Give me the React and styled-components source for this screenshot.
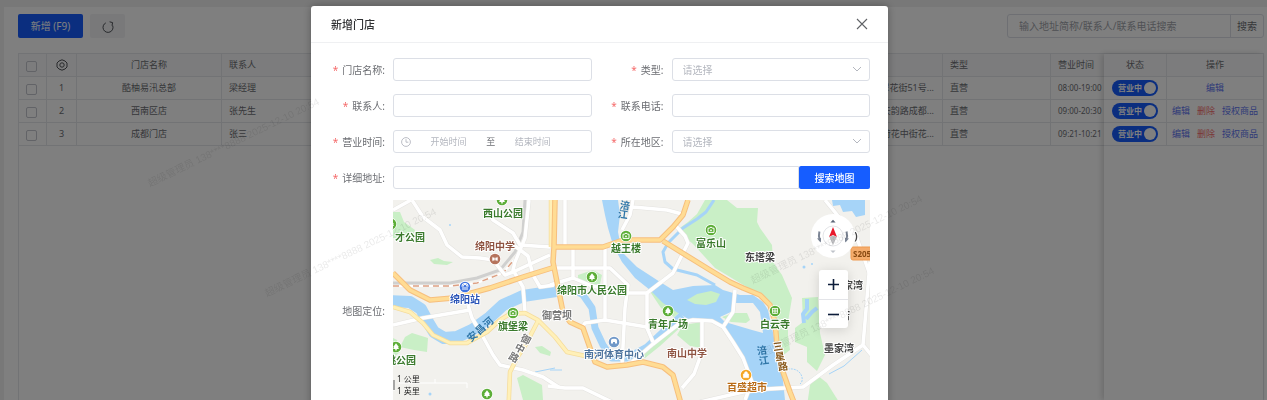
import React from 'react'
import styled, { createGlobalStyle } from 'styled-components'

const stores = [
  { id: 1, name: '酷柚易汛总部', contact: '梁经理', address: '成都市武侯区翠花街51号...', type: '直营', time: '08:00-19:00', main: true },
  { id: 2, name: '西南区店', contact: '张先生', address: '成都市高新区天韵路成都...', type: '直营', time: '09:00-20:30' },
  { id: 3, name: '成都门店', contact: '张三', address: '成都市武侯区荷花中街花...', type: '直营', time: '09:21-10:21' },
]

const greens = [
  'M705 200L727 200L737 208L758 208L757 222L760 228L772 245L773 262L782 275L792 298L788 322L788 335L790 350L782 356L777 328L772 305L760 295L740 283L715 268L693 244L677 230L688 222L697 214Z',
  'M802 298L818 297L820 333L825 355L817 371L807 362L807 347L795 342L795 328L803 322Z',
  'M817 375L827 383L839 402L845 420L805 420L810 385Z',
  'M683 325L702 322L702 348L690 346L677 335Z',
  'M578 275L593 270L602 275L600 284L588 286L578 280Z',
  'M393 212L400 212L404 222L415 230L412 238L393 238Z',
  'M405 337L412 333L428 338L427 352L414 350L400 347Z',
  'M517 378L523 375L542 385L543 400L548 420L527 420L523 400Z',
  'M535 347L542 346L551 352L550 356L540 353Z',
  'M430 260L438 258L444 261L453 262L447 265L434 264Z',
  'M393 338L397 340L400 352L393 358Z',
  'M632 358L652 343L682 320L684 324L660 346L645 358Z',
  'M649 290L660 295L680 312L674 317L661 308Z',
]

const islands = ['M687 300L697 294L711 291L720 294L716 302L706 305L695 304Z', 'M722 317L733 313L747 313L750 320L746 323L731 322Z']

const river =
  'M602 200L618 200L620 215L618 232L622 252L637 267L657 280L673 290L693 286L715 285L723 290L740 295L753 295L763 302L768 310L772 328L777 352L782 372L785 400L787 420L747 420L747 400L750 378L740 352L727 332L710 320L690 320L678 313L663 303L650 290L635 278L622 262L613 245L608 228L605 215Z'

const whiteRoads = [
  'M393 210L411 200',
  'M412 200L423 217L440 230L447 245L462 257L480 258L493 260L505 275L513 272L550 255',
  'M486 208L493 220L513 233L520 245L550 247',
  'M529 200L525 238L515 262L513 270L523 287L525 312',
  'M515 246L528 256L533 275L540 287L554 285',
  'M468 305L472 318L482 335L493 355L500 365L523 370L543 377L560 388',
  'M393 325L423 318L470 310',
  'M565 200V246',
  'M573 248V278',
  'M555 268L610 268L628 285L625 308L622 366',
  'M605 248V320',
  'M550 285L573 278L592 286L628 293L647 293V328L653 342',
  'M580 330L585 323L605 320L647 327',
  'M647 293L673 273L688 243L685 236L676 226',
  'M633 200L630 215L622 230M633 207L667 210L682 214',
  'M632 362L653 344L680 323L693 320L712 321L723 327L733 342L743 358L752 382L745 400',
  'M702 322V352L694 374L682 388',
  'M723 327L733 312L735 290',
  'M700 402L743 392L767 389L803 387L833 365L863 345',
  'M870 262L865 322L863 345L872 356',
  'M825 200L843 222L857 238L870 275',
  'M548 386L565 388L583 388L612 402',
]

const yellowRoads = [
  'M393 307L410 312L423 323L433 335L450 343L467 343L487 332L500 320L510 314L525 313L538 320L555 337L567 352L590 357',
  'M538 321L526 344L517 358L510 372L508 420',
  'M551 200V247',
]

const orangeRoads = [
  'M393 273L410 290L430 300L453 298L490 288L523 277L555 267',
  'M555 200L554 247L553 262L557 282L563 312L570 322L583 328L590 348L595 362L607 367L627 365L643 362L663 367L673 375L680 400L684 420',
  'M554 247L603 247L623 240L660 240L673 227L683 215L688 200',
  'M663 241L710 270L730 282L743 288L760 295L770 305L775 322L777 345L783 372L790 392L797 410',
]

const places = [
  { text: '西山公园', x: 503, y: 217, color: '#3a7a2c' },
  { text: '才公园', x: 410, y: 241, color: '#3a7a2c' },
  { text: '绵阳中学', x: 495, y: 250, color: '#8f5442' },
  { text: '绵阳站', x: 465, y: 303, color: '#2b55b8' },
  { text: '旗堡梁', x: 513, y: 330, color: '#3a7a2c' },
  { text: '御营坝', x: 557, y: 319, color: '#777' },
  { text: '绵阳市人民公园', x: 592, y: 294, color: '#3a7a2c' },
  { text: '越王楼', x: 626, y: 252, color: '#3a7a2c' },
  { text: '富乐山', x: 711, y: 247, color: '#3a7a2c' },
  { text: '东塔梁', x: 760, y: 261, color: '#444' },
  { text: '青年广场', x: 668, y: 328, color: '#3a7a2c' },
  { text: '南河体育中心', x: 614, y: 358, color: '#4d739d' },
  { text: '南山中学', x: 687, y: 357, color: '#8f5442' },
  { text: '白云寺', x: 775, y: 328, color: '#3a7a2c' },
  { text: '百盛超市', x: 747, y: 391, color: '#b86a14' },
  { text: '赵家湾', x: 848, y: 289, color: '#444' },
  { text: '杨家店', x: 835, y: 319, color: '#444' },
  { text: '墨家湾', x: 839, y: 352, color: '#444' },
  { text: '桃公园', x: 401, y: 364, color: '#3a7a2c' },
  { text: ')', x: 856, y: 240, color: '#444' },
]

const turned = [
  { text: '安', x: 472, y: 336, r: -40, color: '#2f76a8' },
  { text: '昌', x: 480, y: 329, r: -42, color: '#2f76a8' },
  { text: '河', x: 488, y: 322, r: -42, color: '#2f76a8' },
  { text: '御', x: 526, y: 339, r: 28, color: '#777' },
  { text: '中', x: 520, y: 348, r: 28, color: '#777' },
  { text: '路', x: 514, y: 357, r: 28, color: '#777' },
  { text: '涪', x: 625, y: 205, r: 8, color: '#2f76a8' },
  { text: '江', x: 623, y: 214, r: 8, color: '#2f76a8' },
  { text: '涪', x: 762, y: 350, r: -8, color: '#2f76a8' },
  { text: '江', x: 764, y: 360, r: -8, color: '#2f76a8' },
  { text: '三', x: 778, y: 346, r: -8, color: '#8a5a1c' },
  { text: '星', x: 780, y: 356, r: -8, color: '#8a5a1c' },
  { text: '路', x: 783, y: 366, r: -8, color: '#8a5a1c' },
]

const markers = [
  { x: 502, y: 200, kind: 'tree' },
  { x: 391, y: 224, kind: 'tree' },
  { x: 495, y: 259, kind: 'school', color: '#b5735c' },
  { x: 465, y: 287, kind: 'station', color: '#3f74e0' },
  { x: 513, y: 313, kind: 'camera' },
  { x: 592, y: 277, kind: 'tree' },
  { x: 626, y: 236, kind: 'camera' },
  { x: 711, y: 230, kind: 'camera' },
  { x: 668, y: 311, kind: 'tree' },
  { x: 614, y: 342, kind: 'sport', color: '#7098c8' },
  { x: 775, y: 311, kind: 'temple' },
  { x: 746, y: 375, kind: 'bag', color: '#f5a623' },
  { x: 396, y: 347, kind: 'tree' },
  { x: 487, y: 394, kind: 'tree' },
]

const watermarks = [[150, 187], [267, 297], [753, 284], [765, 356]]

const glyphs = {
  tree: <path d="M0 -3.8L3 0.2H1.9L3 2H0.7V3.6H-0.7V2H-3L-1.9 0.2H-3Z" fill="#fff" />,
  camera: (
    <g fill="none" stroke="#fff">
      <path d="M-3 -1.8H-1.4L-1 -2.6H1L1.4 -1.8H3V2.4H-3Z" />
      <circle r="0.9" cy="0.3" fill="#fff" stroke="none" />
    </g>
  ),
  school: <path d="M-3 -2.2L0 -1.4L3 -2.2V2.2L0 1.6L-3 2.2ZM0 -1.4V1.6" fill="#fff" stroke="#b5735c" strokeWidth="0.6" />,
  station: <path d="M-2 3V-0.6A2 2 0 0 1 2 -0.6V3M-3.2 -0.5A3.2 3.2 0 0 1 3.2 -0.5M0 0V3" fill="none" stroke="#fff" />,
  sport: <path d="M-3 -1.8A3 1.4 0 0 1 3 -1.8V1.6H1V0H-1V1.6H-3Z" fill="#fff" />,
  temple: <path d="M-3 -2.4H3M-2.4 -2.4V2.4H2.4V-2.4M-3 0H3M0 -2.4V2.4" fill="none" stroke="#fff" strokeWidth="0.9" />,
  bag: <path d="M-2.6 -1H2.6V2.6H-2.6ZM-1.4 -1V-1.8A1.4 1.4 0 0 1 1.4 -1.8V-1" fill="#fff" stroke="#fff" strokeWidth="0.7" />,
}

const MapCanvas = () => (
  <MapSvg viewBox="393 200 477 220" preserveAspectRatio="xMidYMid slice" role="img" aria-label="地图">
    <rect x="393" y="200" width="477" height="220" fill="#f2f1ed" />
    {greens.map((d) => <path key={d} d={d} fill="#c9efc6" />)}
    <g fill="none" stroke="#a6d4f8" strokeLinejoin="round">
      <path d="M390 301L410 302L421 309L428 322L434 332L444 338L457 337L472 330L490 317L503 305L523 296L556 291" strokeWidth="12" />
      <path d="M550 291L570 288L583 295L592 308L595 328L603 345L612 358L627 358L647 347L663 332L682 315" strokeWidth="7" />
      <path d="M714 200L706 212L697 219L683 228L668 243L663 252L665 262L673 269L697 275L715 285" strokeWidth="3" />
      <path d="M804 323L803 314L807 309L807 299M806 319L812 312L817 308" strokeWidth="4" />
      <path d="M829 374L844 366L862 350M550 370H562M535 372L555 368" strokeWidth="1" />
      <path d="M782 371C800 363 806 380 800 384" strokeWidth="1" strokeDasharray="2 1" />
    </g>
    <path d={river} fill="#a6d4f8" />
    <path d="M832 200H865V215L856 217L852 211L843 212L840 205L833 206Z" fill="#a6d4f8" />
    <path d="M735 303L753 303L760 312L763 333L752 330L725 322L720 317L733 311Z" fill="#f2f1ed" />
    {islands.map((d) => <path key={d} d={d} fill="#c9efc6" />)}
    <g fill="#a6d4f8">
      <circle cx="450" cy="225" r="1" />
      <circle cx="804" cy="267" r="1.5" />
      <circle cx="812" cy="264" r="1" />
      <circle cx="434" cy="317" r="1" />
      <circle cx="430" cy="394" r="1.5" />
    </g>
    <g fill="none">
      <path d="M393 283H450L477 278L500 270L515 252L523 232L525 200" stroke="#d0d0cf" strokeWidth="3" />
      <path d="M393 286H450L477 283L503 273L518 255L526 235L528 200" stroke="#fff" strokeWidth="2" />
      <path d="M393 286H450L477 283L503 273L518 255L526 235L528 200" stroke="#dda083" strokeWidth="1.5" strokeDasharray="6 4" />
    </g>
    <g fill="none" strokeLinejoin="round">
      {whiteRoads.map((d) => <path key={d} d={d} stroke="#e4e3e0" strokeWidth="4.5" />)}
      {whiteRoads.map((d) => <path key={d} d={d} stroke="#fff" strokeWidth="3.5" />)}
      {yellowRoads.map((d) => <path key={d} d={d} stroke="#f5dc9c" strokeWidth="4.5" />)}
      {yellowRoads.map((d) => <path key={d} d={d} stroke="#fff0b8" strokeWidth="3" />)}
      {orangeRoads.map((d) => <path key={d} d={d} stroke="#f7bf7d" strokeWidth="5.5" />)}
      {orangeRoads.map((d) => <path key={d} d={d} stroke="#ffdc94" strokeWidth="3.5" />)}
    </g>
    {markers.map((m) => (
      <g key={`${m.x}-${m.y}`} transform={`translate(${m.x} ${m.y})`}>
        <circle r="6" fill="#fff" />
        <circle r="5.3" fill={m.color || '#5dae38'} />
        {glyphs[m.kind]}
      </g>
    ))}
    {places.map((p) => <PlaceName key={p.text} x={p.x} y={p.y} fill={p.color}>{p.text}</PlaceName>)}
    {turned.map((p) => (
      <PlaceName key={`${p.x}-${p.y}`} transform={`translate(${p.x} ${p.y}) rotate(${p.r})`} dy="4" fill={p.color} $bare={p.color === '#2f76a8'}>
        {p.text}
      </PlaceName>
    ))}
    <rect x="851" y="247" width="24" height="13" rx="2" fill="#f5ac6c" stroke="#ee9a50" />
    <RoadNumber x="853" y="257">S205</RoadNumber>
    <path d="M394 380V391M398 383H467M435 379V383M467 383V388" stroke="#fff" fill="none" />
    <path d="M394 380V390" stroke="#555" />
    <ScaleText x="397" y="382">1 公里</ScaleText>
    <ScaleText x="397" y="394">1 英里</ScaleText>
  </MapSvg>
)

const Compass = () => (
  <CompassButton type="button" aria-label="指南针">
    <svg width="44" height="44" viewBox="-22 -22 44 44">
      <circle r="10" fill="#fff" stroke="#e4e5e8" />
      <path d="M0 -9L4 1L0 -1L-4 1Z" fill="#e8192c" />
      <path d="M0 9L3.6 1L0 -0.6L-3.6 1Z" fill="#bdbdc0" />
      <path d="M-2.6 -13.4H2.6L0 -16.2Z" fill="#5b6577" />
      <path d="M-2.6 14.4H2.6L0 17Z" fill="#bfc3ca" />
      <path d="M-13.6 -4.5A14.6 14.6 0 0 0 -13 5M13.6 -4.5A14.6 14.6 0 0 1 13 5" fill="none" stroke="#7b8494" strokeWidth="2" />
      <path d="M-16 2.4L-12 2L-12 6.4ZM16 2.4L12 2L12 6.4Z" fill="#7b8494" />
    </svg>
  </CompassButton>
)

const Field = ({ id, label, required, wide, children }) => (
  <FormItem $wide={wide}>
    <FieldLabel htmlFor={id}>
      {required && <Star>*</Star>}
      {label}:
    </FieldLabel>
    {children}
  </FormItem>
)

const SelectField = ({ id }) => (
  <SelectBox>
    <Select id={id} defaultValue="">
      <option value="">请选择</option>
    </Select>
    <svg width="10" height="6" viewBox="0 0 10 6" fill="none" stroke="#b4b7bf">
      <path d="M1 1L5 5L9 1" />
    </svg>
  </SelectBox>
)

const App = () => {
  return (
    <Page>
      <GlobalStyle />
      <Panel>
        <Toolbar>
          <PrimaryButton type="button">新增 (F9)</PrimaryButton>
          <IconButton type="button" aria-label="刷新">
            <svg width="12" height="12" viewBox="0 0 12 12" fill="none" stroke="#4e5156">
              <path d="M3.8 1.9A5 5 0 1 0 10.6 4.4M7.6 0.8L10.6 1.6L10 4.6" />
            </svg>
          </IconButton>
          <SearchBox>
            <SearchInput aria-label="搜索门店" placeholder="输入地址简称/联系人/联系电话搜索" />
            <SearchButton type="button">搜索</SearchButton>
          </SearchBox>
        </Toolbar>

        <TableArea>
          <MainTable>
            <Table>
              <colgroup>
                <col width="28" />
                <col width="30" />
                <col width="145" />
                <col width="180" />
                <col />
                <col width="240" />
                <col width="108" />
                <col width="53" />
              </colgroup>
              <thead>
                <tr>
                  <Th $center><Checkbox type="checkbox" aria-label="全选" /></Th>
                  <Th $center>
                    <GearSvg width="12" height="12" viewBox="0 0 12 12" fill="none" stroke="#4e5156">
                      <path d="M6 0.8L9 2L11 4V8L9 10L6 11.2L3 10L1 8V4L3 2Z" strokeLinejoin="round" />
                      <circle cx="6" cy="6" r="2.2" />
                    </GearSvg>
                  </Th>
                  <Th $center>门店名称</Th>
                  <Th>联系人</Th>
                  <Th>联系电话</Th>
                  <Th>地址</Th>
                  <Th>类型</Th>
                  <Th>营业时间</Th>
                </tr>
              </thead>
              <tbody>
                {stores.map((s) => (
                  <tr key={s.id}>
                    <Td $center><Checkbox type="checkbox" aria-label={s.name} /></Td>
                    <Td $center>{s.id}</Td>
                    <Td $center>{s.name}</Td>
                    <Td>{s.contact}</Td>
                    <Td />
                    <Td $right>{s.address}</Td>
                    <Td>{s.type}</Td>
                    <Td><Time>{s.time}</Time></Td>
                  </tr>
                ))}
              </tbody>
            </Table>
          </MainTable>
          <FixedTable>
            <Table>
              <colgroup>
                <col width="63" />
                <col />
              </colgroup>
              <thead>
                <tr>
                  <Th $center>状态</Th>
                  <Th $center>操作</Th>
                </tr>
              </thead>
              <tbody>
                {stores.map((s) => (
                  <tr key={s.id}>
                    <Td $center>
                      <Switch>
                        <SwitchInput type="checkbox" defaultChecked />
                        营业中
                        <Knob />
                      </Switch>
                    </Td>
                    <Td $center>
                      <Actions>
                        <Action href="#edit">编辑</Action>
                        {!s.main && <Action href="#delete" $danger>删除</Action>}
                        {!s.main && <Action href="#goods">授权商品</Action>}
                      </Actions>
                    </Td>
                  </tr>
                ))}
              </tbody>
            </Table>
          </FixedTable>
        </TableArea>
      </Panel>

      <Overlay>
        <Modal role="dialog" aria-labelledby="dialog-title">
          <ModalHeader>
            <Title id="dialog-title">新增门店</Title>
            <CloseButton type="button" aria-label="关闭">
              <svg width="12" height="12" viewBox="0 0 12 12" stroke="#606266" strokeWidth="1.1">
                <path d="M1 1L11 11M11 1L1 11" />
              </svg>
            </CloseButton>
          </ModalHeader>
          <Form>
            <Field id="name" label="门店名称" required><Input id="name" /></Field>
            <Field id="type" label="类型" required><SelectField id="type" /></Field>
            <Field id="contact" label="联系人" required><Input id="contact" /></Field>
            <Field id="phone" label="联系电话" required><Input id="phone" /></Field>
            <Field id="start" label="营业时间" required>
              <TimeRange>
                <svg width="10" height="10" viewBox="0 0 10 10" fill="none" stroke="#b4b7bf" strokeWidth="0.9">
                  <circle cx="5" cy="5" r="4.4" />
                  <path d="M5 2.2V5.2H7.4" />
                </svg>
                <TimeInput id="start" placeholder="开始时间" />
                <span>至</span>
                <TimeInput aria-label="结束时间" placeholder="结束时间" />
              </TimeRange>
            </Field>
            <Field id="region" label="所在地区" required><SelectField id="region" /></Field>
            <Field id="address" label="详细地址" required wide>
              <AddressRow>
                <Input id="address" />
                <MapButton type="button">搜索地图</MapButton>
              </AddressRow>
            </Field>
            <Field label="地图定位" wide>
              <MapBox>
                <MapCanvas />
                <MapControls>
                  <Compass />
                  <ZoomGroup>
                    <ZoomButton type="button" aria-label="放大">
                      <svg width="13" height="13" viewBox="0 0 13 13" stroke="#0c1c3a" strokeWidth="1.6">
                        <path d="M1 6.5H12M6.5 1V12" />
                      </svg>
                    </ZoomButton>
                    <ZoomButton type="button" aria-label="缩小">
                      <svg width="13" height="13" viewBox="0 0 13 13" stroke="#0c1c3a" strokeWidth="1.6">
                        <path d="M1 6.5H12" />
                      </svg>
                    </ZoomButton>
                  </ZoomGroup>
                </MapControls>
              </MapBox>
            </Field>
          </Form>
        </Modal>
      </Overlay>

      <Watermark aria-hidden="true">
        {watermarks.map(([x, y]) => (
          <text key={x} transform={`translate(${x} ${y}) rotate(-26)`}>超级管理员 138****8888 2025-12-10 20:54</text>
        ))}
      </Watermark>
    </Page>
  )
}

const GlobalStyle = createGlobalStyle`
  * {
    box-sizing: border-box;
  }
  body {
    margin: 0;
    overflow: hidden;
    background: #f0f0f0;
    color: #6c6e73;
    font-family: "Noto Sans", "Noto Sans CJK SC", sans-serif;
    font-size: 10px;
  }
  button, input, select {
    font-family: inherit;
    font-size: 10px;
    color: inherit;
    margin: 0;
    outline: none;
  }
  svg {
    display: block;
  }
`

const Page = styled.div`
  display: flex;
  height: 100vh;
  padding: 7px 0 0 4px;
`

const Panel = styled.main`
  flex: 1;
  min-width: 0;
  display: flex;
  flex-direction: column;
  gap: 15px;
  padding: 7px 3px 0 14px;
  background: #fff;
`

const Toolbar = styled.div`
  display: flex;
  gap: 7px;
  height: 24px;
`

const PrimaryButton = styled.button`
  width: 65px;
  border: 0;
  border-radius: 2px;
  background: #165dff;
  color: #fff;
  padding: 0 0 2px;
`

const IconButton = styled.button`
  display: flex;
  align-items: center;
  justify-content: center;
  width: 35px;
  border: 0;
  border-radius: 2px;
  background: #f2f3f5;
  padding: 2px 0 0;
`

const SearchBox = styled.div`
  display: flex;
  width: 257px;
  margin-left: auto;
  border: 1px solid #dcdfe6;
  border-radius: 3px;
`

const SearchInput = styled.input`
  flex: 1;
  min-width: 0;
  border: 0;
  background: none;
  padding: 0 11px;
  &::placeholder {
    color: #a0a3aa;
  }
`

const SearchButton = styled.button`
  width: 33px;
  border: 0;
  border-left: 1px solid #dcdfe6;
  background: none;
  padding: 0 0 2px;
`

const TableArea = styled.div`
  flex: 1;
  display: flex;
  border: 1px solid #e4e6ea;
  border-bottom: 0;
`

const MainTable = styled.div`
  flex: 1;
  min-width: 0;
  overflow: hidden;
`

const FixedTable = styled.div`
  width: 159px;
  background: #fff;
  box-shadow: -2px 0 6px rgba(0, 0, 0, 0.16);
  position: relative;
`

const Table = styled.table`
  width: 100%;
  table-layout: fixed;
  border-collapse: separate;
  border-spacing: 0;
  font-size: 9px;
`

const Td = styled.td`
  height: 23px;
  padding: 0 0 0 ${(p) => (p.$center ? 0 : 7)}px;
  padding-right: ${(p) => (p.$right ? 8 : 0)}px;
  border-right: 1px solid #e4e6ea;
  border-bottom: 1px solid #e4e6ea;
  text-align: ${(p) => (p.$center ? 'center' : p.$right ? 'right' : 'left')};
  white-space: nowrap;
  line-height: 12px;
  &:last-child {
    border-right: 0;
  }
`

const Th = styled(Td).attrs({ as: 'th' })`
  background: #f9f9fa;
  font-weight: 400;
`

const Time = styled.span`
  font-size: 8px;
`

const Checkbox = styled.input`
  appearance: none;
  display: block;
  width: 11px;
  height: 11px;
  margin: 2px auto 0 7px;
  border: 1px solid #c4c7ce;
  border-radius: 2px;
`

const GearSvg = styled.svg`
  margin: 0 auto;
`

const Switch = styled.label`
  display: inline-flex;
  align-items: center;
  justify-content: space-between;
  width: 46px;
  height: 16px;
  padding: 0 2px 0 6px;
  border-radius: 8px;
  background: #165dff;
  color: #fff;
  font-size: 8px;
  font-weight: 700;
  vertical-align: middle;
`

const SwitchInput = styled.input`
  position: absolute;
  opacity: 0;
  width: 1px;
  height: 1px;
`

const Knob = styled.span`
  width: 12px;
  height: 12px;
  border-radius: 50%;
  background: #fff;
`

const Actions = styled.div`
  display: flex;
  justify-content: center;
  gap: 7px;
`

const Action = styled.a`
  color: ${(p) => (p.$danger ? '#f56c6c' : '#6075f0')};
  text-decoration: none;
`

const Overlay = styled.div`
  position: fixed;
  inset: 0;
  display: flex;
  align-items: flex-start;
  padding: 6px 379px 0 311px;
  overflow: hidden;
  background: rgba(0, 0, 0, 0.5);
`

const Modal = styled.section`
  flex: 1;
  min-width: 0;
  border-radius: 3px;
  background: #fff;
  box-shadow: 0 0 8px rgba(0, 0, 0, 0.3);
`

const ModalHeader = styled.header`
  display: flex;
  align-items: center;
  justify-content: space-between;
  height: 37px;
  padding: 0 20px;
  border-bottom: 1px solid #eff0f2;
`

const Title = styled.h2`
  margin: 0;
  color: #303133;
  font-size: 11px;
  font-weight: 500;
`

const CloseButton = styled.button`
  border: 0;
  background: none;
  padding: 0;
`

const Form = styled.form`
  display: grid;
  grid-template-columns: 1fr 1fr;
  row-gap: 9px;
  padding: 13px 18px 20px 2px;
`

const FormItem = styled.div`
  display: grid;
  grid-template-columns: 80px 1fr;
  align-items: center;
  min-height: 27px;
  grid-column: ${(p) => (p.$wide ? '1 / -1' : 'auto')};
`

const FieldLabel = styled.label`
  padding: 0 8px 0 0;
  text-align: right;
`

const Star = styled.span`
  margin-right: 4px;
  color: #f56c6c;
`

const Input = styled.input`
  width: 100%;
  min-width: 0;
  height: 23px;
  padding: 0 11px;
  border: 1px solid #dcdfe6;
  border-radius: 3px;
  background: #fff;
`

const SelectBox = styled.div`
  position: relative;
  svg {
    position: absolute;
    right: 8px;
    top: 8px;
    pointer-events: none;
  }
`

const Select = styled.select`
  appearance: none;
  display: block;
  width: 100%;
  height: 23px;
  padding: 0 10px;
  border: 1px solid #dcdfe6;
  border-radius: 3px;
  background: #fff;
  color: #b4b7bf;
`

const TimeRange = styled.div`
  display: grid;
  grid-template-columns: 10px 1fr 9px 1fr;
  align-items: center;
  height: 23px;
  padding: 0 20px 0 7px;
  border: 1px solid #dcdfe6;
  border-radius: 3px;
  font-size: 9px;
`

const TimeInput = styled.input`
  min-width: 0;
  width: 100%;
  border: 0;
  padding: 0;
  background: none;
  text-align: center;
  font-size: 9px;
  &::placeholder {
    color: #b4b7bf;
  }
`

const AddressRow = styled.div`
  display: flex;
  ${Input} {
    flex: 1;
    border-radius: 3px 0 0 3px;
  }
`

const MapButton = styled.button`
  width: 71px;
  border: 0;
  border-radius: 2px;
  background: #165dff;
  color: #fff;
  font-weight: 500;
  padding: 0;
`

const MapBox = styled.div`
  position: relative;
  height: 220px;
  overflow: hidden;
`

const MapSvg = styled.svg`
  width: 100%;
  height: 100%;
`

const PlaceName = styled.text`
  font-size: 10px;
  font-weight: 700;
  text-anchor: middle;
  paint-order: stroke;
  stroke: ${(p) => (p.$bare ? 'none' : '#fff')};
  stroke-width: 2px;
  stroke-linejoin: round;
`

const RoadNumber = styled.text`
  font-size: 8px;
  font-weight: 700;
  fill: #8a4a12;
`

const ScaleText = styled.text`
  font-size: 8px;
  fill: #222;
`

const MapControls = styled.div`
  position: absolute;
  top: 14px;
  right: 15px;
  display: flex;
  flex-direction: column;
  align-items: center;
  gap: 12px;
`

const CompassButton = styled.button`
  width: 44px;
  height: 44px;
  padding: 0;
  border: 0;
  border-radius: 50%;
  background: #fff;
`

const ZoomGroup = styled.div`
  display: flex;
  flex-direction: column;
  width: 29px;
  border-radius: 3px;
  background: #fff;
  box-shadow: 0 2px 12px rgba(0, 0, 0, 0.14);
`

const ZoomButton = styled.button`
  display: flex;
  align-items: center;
  justify-content: center;
  height: 29px;
  padding: 0;
  border: 0;
  background: none;
  & + & {
    border-top: 1px solid #e3e4e8;
  }
`

const Watermark = styled.svg`
  position: fixed;
  inset: 0;
  width: 100%;
  height: 100%;
  pointer-events: none;
  fill: rgba(0, 0, 0, 0.09);
  font-family: "Liberation Sans", "Noto Sans CJK SC", sans-serif;
  font-size: 10px;
`

export default App
